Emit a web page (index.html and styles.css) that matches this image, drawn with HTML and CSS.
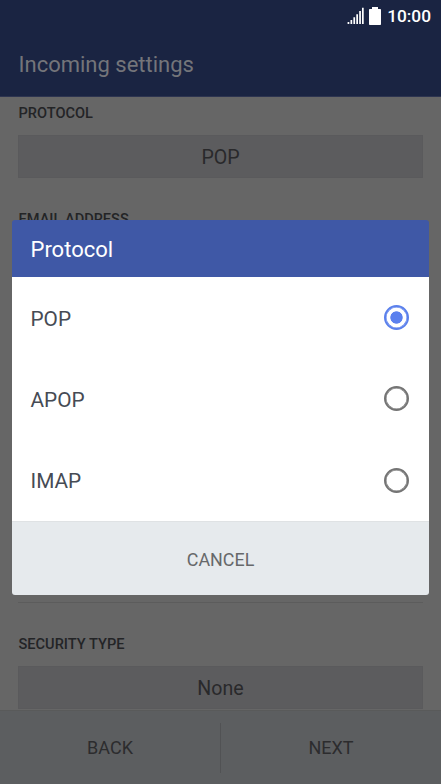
FILE: index.html
```html
<!DOCTYPE html>
<html lang="en">
<head>
<meta charset="utf-8">
<title>Incoming settings</title>
<link rel="stylesheet" href="styles.css">
</head>
<body>
<div class="screen">
  <header class="top">
    <div class="status">
      <svg class="signal" width="17" height="18" viewBox="0 0 17 18"><path d="M.6 15h1.7v2H.6zM3.5 13h1.7v4H3.5zM6.4 10.2h1.7V17H6.4zM9.3 7.2H11V17H9.3zM12.2 4.1h1.7V17h-1.7zM15 .8h1.7V17H15z" fill="#fff"/></svg>
      <svg class="battery" width="12" height="18" viewBox="0 0 12 18"><path d="M3 0h6v2h2.2q.8 0 .8.8V17.2q0 .8-.8.8H.8Q0 18 0 17.2V2.8Q0 2 .8 2H3z" fill="#fff"/></svg>
      <span class="clock">10:00</span>
    </div>
    <h1 class="title">Incoming settings</h1>
  </header>
  <main class="form">
    <h2 class="label">PROTOCOL</h2>
    <div class="select">POP</div>
    <h2 class="label email">EMAIL ADDRESS</h2>
    <div class="fields"></div>
    <h2 class="label security">SECURITY TYPE</h2>
    <div class="select">None</div>
  </main>
  <footer class="nav">
    <div class="nav-button">BACK</div>
    <div class="divider"></div>
    <div class="nav-button">NEXT</div>
  </footer>
  <section class="dialog" role="dialog">
    <h2 class="dialog-title">Protocol</h2>
    <div class="options">
      <div class="option"><span>POP</span><i class="radio checked"></i></div>
      <div class="option"><span>APOP</span><i class="radio"></i></div>
      <div class="option"><span>IMAP</span><i class="radio"></i></div>
    </div>
    <div class="cancel">CANCEL</div>
  </section>
</div>
</body>
</html>
```
FILE: styles.css
```css
* { box-sizing: border-box; }
body { margin: 0; font-family: Roboto, sans-serif; }
h1, h2 { margin: 0; font-weight: 400; }
.screen { position: relative; width: 441px; height: 784px; overflow: hidden; display: flex; flex-direction: column; background: #666; }
.top { flex: none; height: 97px; background: #1a2442; border-bottom: 1px solid #2d3450; }
.status { height: 32px; padding-right: 10px; display: flex; justify-content: flex-end; align-items: center; color: #fff; }
.signal { margin-right: 4.5px; }
.battery { margin-top: -1px; margin-right: 6.2px; }
.clock { font-size: 17.3px; font-weight: 500; line-height: 32px; }
.title { padding-left: 18.5px; font-size: 22px; line-height: 66px; color: #74757a; }
.form { flex: 1; min-height: 0; overflow: hidden; padding: 6px 18px 0; display: flex; flex-direction: column; }
.label { flex: none; height: 20px; padding-left: .5px; font-size: 14.6px; font-weight: 500; line-height: 21px; color: #232426; }
.select { flex: none; height: 43px; margin-top: 12px; background: #5c5c5e; border: 1px solid #5a5a5c; font-size: 19.6px; line-height: 43px; text-align: center; color: #29292b; }
.email { margin-top: 31px; }
.fields { flex: none; height: 374px; border-bottom: 1px solid #5c5c5c; }
.security { margin-top: 31px; }
.nav { flex: none; height: 74px; display: flex; align-items: center; background: #5c5e60; border-top: 1px solid #595a5a; }
.nav-button { flex: 1; text-align: center; font-size: 18px; line-height: 74px; color: #2c2c2e; }
.divider { width: 1px; height: 50px; background: #515254; }
.dialog { position: absolute; left: 12px; top: 220px; width: 417px; height: 375px; border-radius: 3px; overflow: hidden; }
.dialog-title { height: 57px; padding-left: 18.5px; background: #3f58a6; color: #fff; font-size: 22px; line-height: 59px; }
.options { height: 244px; background: #fff; display: flex; flex-direction: column; }
.option { flex: 1; padding: 0 20.2px 0 18.5px; display: flex; align-items: center; justify-content: space-between; color: #464b54; font-size: 20.8px; line-height: 24px; }
.option span { padding-top: 2px; }
.radio { width: 25px; height: 25px; border: 2.5px solid #747474; border-radius: 50%; box-shadow: inset 0 0 0 .5px #747474; }
.checked { border-color: #5b80ec; background: radial-gradient(circle, #5b80ee 5.8px, transparent 6.5px); box-shadow: inset 0 0 0 .5px #5b80ec; }
.cancel { height: 74px; background: #e6eaed; border-top: 1px solid #dfe2e4; text-align: center; font-size: 17.9px; line-height: 76px; color: #66686a; }
```
